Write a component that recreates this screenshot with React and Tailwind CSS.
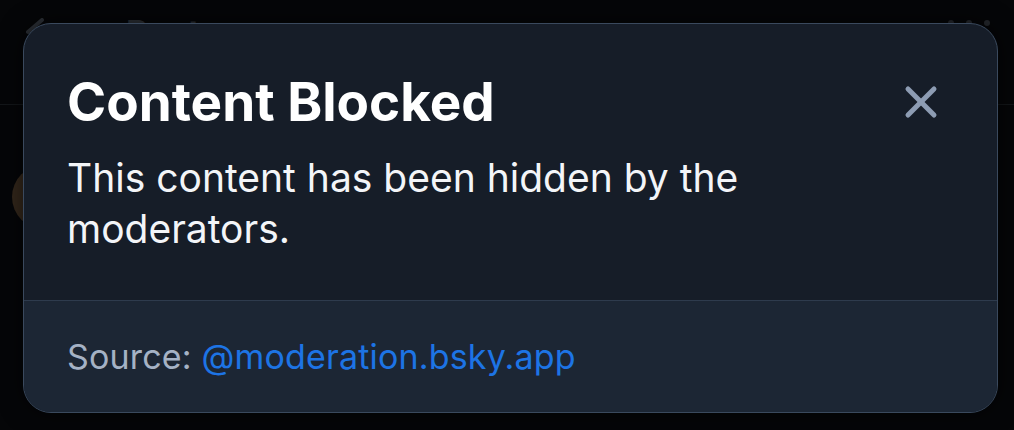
import { X } from "lucide-react";

export default function App() {
  return (
    <div className="relative h-[430px] w-[1014px] overflow-hidden bg-[#050608] font-['Inter',sans-serif]">
      {/* page behind the dialog */}
      <div className="flex h-[105px] items-start gap-20 border-b border-[#131619] px-6 pt-4 text-[#2b2f35]">
        <svg width="22" height="22" viewBox="0 0 22 22" className="mt-0.5">
          <path d="M18 2 L4 14" stroke="#2b2f35" strokeWidth="4" strokeLinecap="round" />
        </svg>
        <span className="text-[34px] font-bold leading-none">Post</span>
        <div className="ml-auto mt-1 flex gap-3">
          <span className="h-1.5 w-1.5 rounded-full bg-[#24272c]" />
          <span className="h-1.5 w-1.5 rounded-full bg-[#24272c]" />
          <span className="h-1.5 w-1.5 rounded-full bg-[#24272c]" />
        </div>
      </div>
      <div className="ml-3 mt-[60px] h-[64px] w-[64px] rounded-full bg-[#33271b]" />

      {/* dialog */}
      <div className="absolute left-[23px] top-[23px] w-[975px] overflow-hidden rounded-[28px] border border-[#3a495d] bg-[#161d28] shadow-[0_0_24px_rgba(0,0,0,0.6)]">
        <div className="flex h-[276px] items-start justify-between pl-[43px] pr-[50px] pt-[46px]">
          <div className="max-w-[790px]">
            <h1 className="text-[53px] font-bold leading-[64px] text-white">
              Content Blocked
            </h1>
            <p className="mt-[18px] text-[39px] leading-[51px] text-[#f3f5f8]">
              This content has been hidden by the moderators.
            </p>
          </div>
          <button className="mt-[6px] text-[#8d9cb3]">
            <X size={52} strokeWidth={2.3} />
          </button>
        </div>
        <div className="flex h-[112px] items-center border-t border-[#2e3b4d] bg-[#1c2634] pl-[43px] text-[34px] tracking-[0.005em]">
          <span className="text-[#a5b2c5]">Source:&nbsp;</span>
          <span className="text-[#1d74e5]">@moderation.bsky.app</span>
        </div>
      </div>
    </div>
  );
}
